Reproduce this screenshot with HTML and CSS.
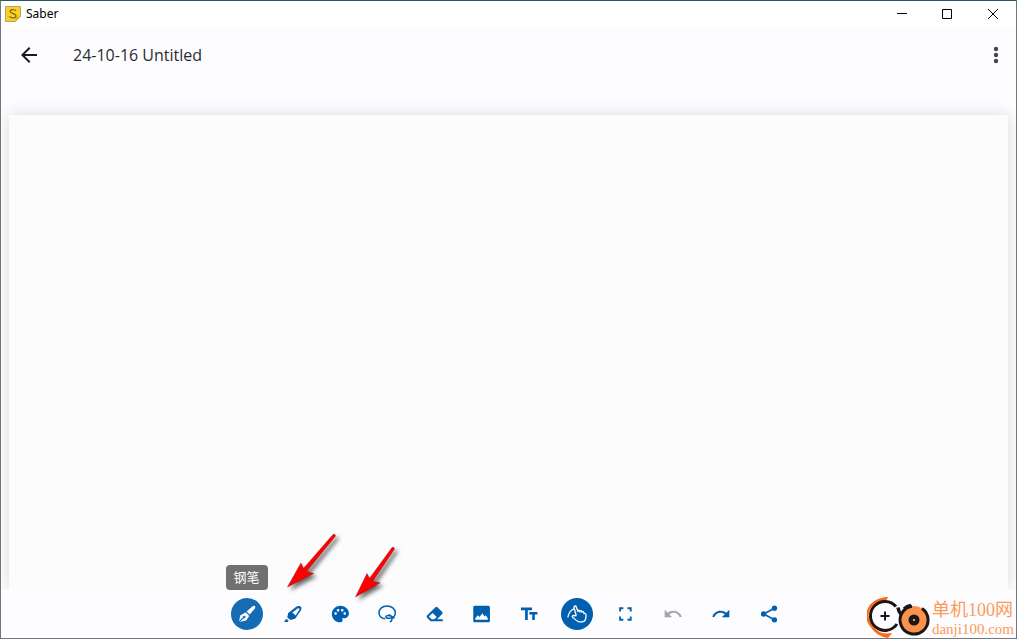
FILE: index.html
```
<!DOCTYPE html>
<html lang="zh-CN">
<head>
<meta charset="utf-8">
<title>Saber</title>
<link rel="stylesheet" href="styles.css">
</head>
<body>
<div class="window">
  <header class="titlebar">
    <svg class="app-icon" viewBox="0 0 16 16"><path d="M.5.5h15v10l-5 5H.5z" fill="#fbd024" stroke="#b5a568"/><path d="M15.500 10.500h-3.500l-1.500 1v4z" fill="#e3b51c"/><path d="M10.800 4.800C9.500 3 5.200 3 5.200 5.500c0 2.600 5.800 1.600 5.800 4.400 0 2.500-4.800 2.400-6.600.5" fill="none" stroke="#776522" stroke-width="1.200"/></svg>
    <span class="app-name">Saber</span>
    <div class="window-controls">
      <button class="window-button" aria-label="最小化"><svg viewBox="0 0 11 11"><path d="M1 4.500h10"/></svg></button>
      <button class="window-button" aria-label="最大化"><svg viewBox="0 0 11 11"><path d="M.5.500h9v9h-9z"/></svg></button>
      <button class="window-button" aria-label="关闭"><svg viewBox="0 0 11 11"><path d="M0 0l10 10M10 0L0 10"/></svg></button>
    </div>
  </header>
  <div class="appbar">
    <button class="icon-button" aria-label="返回"><svg viewBox="0 0 24 24"><path d="M20 11H7.830l5.590-5.590L12 4l-8 8 8 8 1.410-1.410L7.830 13H20z"/></svg></button>
    <h1 class="doc-title">24-10-16 Untitled</h1>
    <button class="icon-button more" aria-label="更多"><svg viewBox="0 0 24 24"><circle cx="12" cy="6" r="2.200"/><circle cx="12" cy="12" r="2.200"/><circle cx="12" cy="18" r="2.200"/></svg></button>
  </div>
  <main class="canvas"><div class="paper"></div></main>
  <footer class="toolbar">
    <div class="tools">
      <div class="tool-wrap">
        <button class="tool selected pen" aria-label="钢笔" aria-describedby="pen-tip"><svg viewBox="0 0 20 20"><path d="M2 18l1.200-6.500 5.500-3.200 3.600 3.600-3.200 4.600z" fill="#fff"/><path d="M9.600 7.500l6-5.300q1.500-.9 2.300-.1t0 2.300l-5.200 6.200z" fill="#fff"/><path d="M2.200 17.800l4.200-4.200" stroke="#166bb5" stroke-width="1.100"/><circle cx="7.200" cy="13" r="1.300" fill="#166bb5"/></svg></button>
        <span class="tooltip" id="pen-tip" role="tooltip">钢笔</span>
      </div>
      <button class="tool" aria-label="荧光笔"><svg viewBox="0 0 20 20"><path fill-rule="evenodd" d="M4 9.200L12.200 2.700q2-1.400 4.200-.4 1.700 1.300.9 3.400L11.300 14.500q-1 1-2.300.8l-2.500.7-3.300-2.700.7-2.500zM8.300 8.600L11.600 11.500 15.500 5.500q.2-1.400-1.500-1.300z"/><path d="M2.200 14.700l2.500 2-1.200 1.400H0z"/></svg></button>
      <button class="tool" aria-label="颜色"><svg viewBox="0 0 24 24"><path d="M11 2C5.490 2 1 6.490 1 12s4.490 10 10 10c1.800 0 3-1.120 3-2.500 0-.61-.23-1.200-.64-1.670-.08-.1-.13-.21-.13-.33 0-.28.220-.5.500-.5H16c3.310 0 5.500-2.690 5.500-6 0-4.960-4.990-9-10.500-9zm-5.500 11c-.83 0-1.500-.67-1.500-1.500S4.670 10 5.500 10s1.500.67 1.500 1.500S6.330 13 5.500 13zm3-4C7.670 9 7 8.330 7 7.500S7.670 6 8.500 6s1.500.67 1.500 1.500S9.330 9 8.500 9zm5 0c-.83 0-1.500-.67-1.500-1.500S12.670 6 13.500 6s1.500.67 1.500 1.500S14.330 9 13.500 9zm3 4c-.83 0-1.500-.67-1.500-1.500s.67-1.500 1.500-1.500 1.500.67 1.500 1.500-.67 1.500-1.500 1.500z"/></svg></button>
      <button class="tool" aria-label="套索"><svg viewBox="0 0 20 20" class="line"><path d="M7 14.800C3.300 14.300 1 12 1 8.800 1 4.800 4.500 2 9 2s8.300 2.600 8.300 6.600c0 3.200-2.100 5.400-5.400 5.700-2 .2-4.200 0-4.100-1.200.1-1.300 2.300-1.700 4-1.400 1.700.3 2.600 1.200 2.500 2.500-.1 1.300-.8 2.800-2.300 4M11 10.500l5.500 3.800"/></svg></button>
      <button class="tool" aria-label="橡皮擦"><svg viewBox="0 0 20 20"><path fill-rule="evenodd" d="M10.500 3.200q1-.9 2 0l4.700 4.700q.9 1 0 2L12 15.200h5.800v2H5.500L2 13.600q-.8-1 0-2zM3.800 12.500l2.700 2.700h2.900l2.300-2.300-4-4z"/></svg></button>
      <button class="tool" aria-label="图片"><svg viewBox="0 0 24 24"><path d="M21.500 20V4c0-1.100-.9-2-2-2h-16c-1.100 0-2 .9-2 2v16c0 1.100.9 2 2 2h16c1.100 0 2-.9 2-2zM4 19v-2l3-3.500 2 2 3.500-4.500 2.500 4 1.500-1.500 2.500 3.500v2z"/></svg></button>
    </div>
    <div class="tools actions">
      <button class="tool" aria-label="文字"><svg viewBox="0 0 20 20"><path d="M2 3.500h11v2.700H8.800V16H6.100V6.200H2zM10.300 8h8.200v2.500h-2.700V16h-2.600v-5.500h-2.900z"/></svg></button>
      <button class="tool selected" aria-label="手指绘画"><svg viewBox="0 0 20 20" class="line finger"><path d="M.8 13.500C1.500 9.500 3.500 6 7 4.800M9.300 11.800L6.900 3.500q0-1.800 1.900-1.600L11.200 8M10.500 6.800q1-1.300 2 0l.6 1.700M12.700 7q1.300-.9 2 .4l.4 1.300M15 7.800q1.400-.6 1.900.8l.1.800q1.700-.3 2 1.200l-.1 3q-.4 3.700-3.300 4.200h-3.800c-2.300-.6-4.200-3-6.400-4.800q-.4-1.600 1.300-1.500l2.600.3"/></svg></button>
      <button class="tool" aria-label="全屏"><svg viewBox="0 0 24 24"><path d="M5 15v5h5v-2.200H7.200V15zM5 9h2.200V6.200H10V4H5zm12.800 8.800H15V20h5v-5h-2.200zM15 4v2.200h2.800V9H20V4z"/></svg></button>
      <button class="tool" aria-label="撤销" disabled><svg viewBox="0 0 24 24"><path d="M12.500 8c-2.650 0-5.050.99-6.900 2.600L2 7v9h9l-3.620-3.620c1.390-1.160 3.160-1.880 5.120-1.880 3.540 0 6.550 2.310 7.600 5.500l2.370-.78C21.080 11.030 17.150 8 12.500 8z"/></svg></button>
      <button class="tool" aria-label="重做"><svg viewBox="0 0 24 24"><path d="M18.400 10.600C16.550 8.990 14.150 8 11.500 8c-4.650 0-8.580 3.030-9.960 7.220L3.900 16c1.050-3.190 4.050-5.500 7.600-5.500 1.950 0 3.730.72 5.120 1.880L13 16h9V7z"/></svg></button>
      <button class="tool" aria-label="分享"><svg viewBox="0 0 24 24"><path d="M18.500 5L5.500 12l13 7" fill="none" stroke="currentColor" stroke-width="2"/><circle cx="18.500" cy="5" r="3.200"/><circle cx="5.500" cy="12" r="3.200"/><circle cx="18.500" cy="19" r="3.200"/></svg></button>
    </div>
  </footer>
  <svg class="arrows" viewBox="0 0 130 80" aria-hidden="true"><g fill="#f00" stroke="#800" stroke-width=".4"><path d="M7.500 57L21 33l2.500 5.500L53 4.500q2.500-.8 2.500 1.500L26.500 41.500l7 2z"/><path d="M75.500 67L87 43.500l2.500 5L112 17.500q2.500-.8 2.500 1.500L92.500 51.500l7.500 1.200z"/></g></svg>
  <div class="watermark">
    <svg class="wm-logo" viewBox="0 0 65 42"><g fill="none"><path d="M17 3C1 5-4 20 5 31q6 7 14 9" stroke="#ff6a14" stroke-width="2.500"/><path d="M8 8Q13 0 21 1l-2 4q-6-1-11 3zM4 31q7 8 21 6l-4 5Q9 40 4 31z" fill="#ff6a14"/><path d="M29 10.500A14.500 14.500 0 1 0 30 28" stroke="#1b1718" stroke-width="3"/><path d="M13.500 20h9M18 15.500v9" stroke="#1b1718" stroke-width="2"/><path d="M31 11.500q.5 4 3 7M37 13q3-3 7-3.500" stroke="#1b1718" stroke-width="3.500"/><circle cx="47" cy="24" r="14" fill="#fb924b"/><path d="M45 10.200A14 14 0 1 0 55 12.500" stroke="#1b1718" stroke-width="3"/><circle cx="47" cy="24" r="5.500" fill="#1b1718"/><circle cx="47" cy="24" r="1.200" fill="#fb924b"/></g></svg>
    <div class="wm-text"><span class="wm-name">单机100网</span><span class="wm-site">danji100.com</span></div>
  </div>
</div>
</body>
</html>
```
FILE: styles.css
```
* { box-sizing: border-box; }
body { margin: 0; font-family: "Noto Sans", "Noto Sans CJK SC", sans-serif; }
button { border: 0; padding: 0; background: none; display: flex; align-items: center; justify-content: center; }
svg { display: block; fill: currentColor; }
.window {
  position: relative;
  display: flex;
  flex-direction: column;
  height: 100vh;
  border: 1px solid #747579;
  border-top-color: #29566a;
  background: #fdfcff;
  overflow: hidden;
}
.titlebar { display: flex; align-items: center; height: 26px; padding-left: 4px; background: #fff; color: #000; }
.app-icon { width: 16px; height: 16px; }
.app-name { margin-left: 5px; font-size: 12px; line-height: 16px; }
.window-controls { display: flex; margin-left: auto; }
.window-button { width: 46px; height: 24px; color: #000; }
.window-button svg { width: 11px; height: 11px; fill: none; stroke: currentColor; stroke-width: 1; overflow: visible; }
.appbar { display: flex; align-items: center; height: 56px; padding: 0 0 0 8px; color: #1b1b1f; }
.icon-button { width: 40px; height: 40px; color: #1b1b1f; }
.icon-button svg { width: 24px; height: 24px; }
.doc-title { margin: 0 0 0 24px; font-family: "Open Sans", "Noto Sans", sans-serif; font-size: 16px; line-height: 24px; font-weight: 400; color: #2b2b2f; }
.more { margin-left: auto; color: #43474e; }
.canvas { flex: 1; display: flex; padding: 32px 8px 0; overflow: hidden; }
.paper { flex: 1; background: #fcfcfc; box-shadow: 0 0 16px rgba(0, 0, 0, 0.14); }
.toolbar { display: flex; align-items: center; justify-content: center; gap: 15px; height: 48px; padding-right: 2px; background: #fdfcff; }
.tools { display: flex; gap: 15px; }
.actions { gap: 16px; }
.tool-wrap { position: relative; }
.tool { width: 32px; height: 32px; border-radius: 50%; color: #0060af; }
.tool svg { width: 20px; height: 20px; }
.tool .line { fill: none; stroke: currentColor; stroke-width: 1.5; }
.tool .finger { stroke-width: 1.3; }
.tool:disabled { color: #a5a5a8; }
.selected { background: #0060af; color: #fff; }
.pen { background: #166bb5; }
.tooltip {
  position: absolute;
  left: 50%;
  bottom: 40px;
  transform: translateX(-50%);
  padding: 4px 8px;
  border-radius: 4px;
  background: #707070;
  color: #fff;
  font-size: 13px;
  line-height: 17px;
  white-space: nowrap;
}
.arrows { position: absolute; left: 279px; bottom: 28px; width: 130px; height: 80px; filter: drop-shadow(3px 3px 2px rgba(0, 0, 0, 0.6)); }
.watermark { position: absolute; right: 2px; bottom: 0; display: flex; align-items: flex-end; color: #fb9b59; }
.wm-logo { width: 65px; height: 42px; }
.wm-text { display: flex; flex-direction: column; font-family: "Liberation Serif", "Noto Sans CJK SC", serif; }
.wm-name { font-size: 18px; line-height: 22px; }
.wm-site { font-size: 15px; line-height: 17px; }
```
